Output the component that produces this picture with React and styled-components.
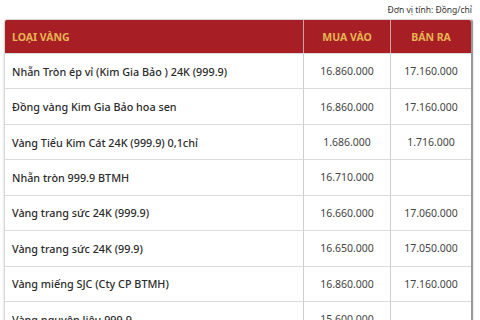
import styled, { createGlobalStyle } from 'styled-components';

const rows = [
  { name: 'Nhẫn Tròn ép vỉ (Kim Gia Bảo ) 24K (999.9)', buy: '16.860.000', sell: '17.160.000' },
  { name: 'Đồng vàng Kim Gia Bảo hoa sen', buy: '16.860.000', sell: '17.160.000' },
  { name: 'Vàng Tiểu Kim Cát 24K (999.9) 0,1chỉ', buy: '1.686.000', sell: '1.716.000' },
  { name: 'Nhẫn tròn 999.9 BTMH', buy: '16.710.000', sell: '' },
  { name: 'Vàng trang sức 24K (999.9)', buy: '16.660.000', sell: '17.060.000' },
  { name: 'Vàng trang sức 24K (99.9)', buy: '16.650.000', sell: '17.050.000' },
  { name: 'Vàng miếng SJC (Cty CP BTMH)', buy: '16.860.000', sell: '17.160.000' },
  { name: 'Vàng nguyên liệu 999.9', buy: '15.600.000', sell: '' },
];

const GlobalStyle = createGlobalStyle`
  html, body {
    margin: 0;
    background: #fff;
    overflow: hidden;
  }
  body {
    font-family: "Noto Sans", "Open Sans", sans-serif;
  }
`;

const Page = styled.div`
  width: 480px;
  height: 320px;
  padding: 0 7px 0 4px;
  box-sizing: border-box;
`;

const Unit = styled.div`
  height: 19px;
  display: flex;
  align-items: center;
  justify-content: flex-end;
  padding-right: 1px;
  font-size: 8.5px;
  color: #333;
`;

const Table = styled.div`
  display: grid;
  grid-template-columns: 298px 87px 1fr;
  border: 1px solid #d6d6d6;
  border-right: 2px solid #9a9a9a;
  border-radius: 3px 3px 0 0;
  box-shadow: 0 1px 3px rgba(0, 0, 0, 0.15);
`;

const Head = styled.div`
  height: 33px;
  background: #a81e25;
  color: #e6b552;
  font-weight: 700;
  font-size: 10.5px;
  display: flex;
  align-items: center;
  justify-content: ${({ $left }) => ($left ? 'flex-start' : 'center')};
  padding-left: ${({ $left }) => ($left ? '7px' : '0')};
  border-left: ${({ $first }) => ($first ? 'none' : '1px solid #c9a4a6')};
  border-radius: ${({ $corner }) => $corner || '0'};
`;

const Cell = styled.div`
  height: 34.43px;
  display: flex;
  align-items: center;
  justify-content: ${({ $left }) => ($left ? 'flex-start' : 'center')};
  padding-left: ${({ $left }) => ($left ? '7px' : '0')};
  border-top: 1px solid #dcdcdc;
  border-left: ${({ $first }) => ($first ? 'none' : '1px solid #cfcfcf')};
  font-size: ${({ $left }) => ($left ? '10.8px' : '10.5px')};
  font-weight: ${({ $left }) => ($left ? 500 : 400)};
  color: ${({ $left }) => ($left ? '#2b2b2b' : '#444')};
`;

export default function App() {
  return (
    <Page>
      <GlobalStyle />
      <Unit>Đơn vị tính: Đồng/chỉ</Unit>
      <Table>
        <Head $left $first $corner="2px 0 0 0">LOẠI VÀNG</Head>
        <Head>MUA VÀO</Head>
        <Head $corner="0 2px 0 0">BÁN RA</Head>
        {rows.map((r) => (
          <>
            <Cell key={r.name + 'n'} $left $first>{r.name}</Cell>
            <Cell key={r.name + 'b'}>{r.buy}</Cell>
            <Cell key={r.name + 's'}>{r.sell}</Cell>
          </>
        ))}
      </Table>
    </Page>
  );
}
